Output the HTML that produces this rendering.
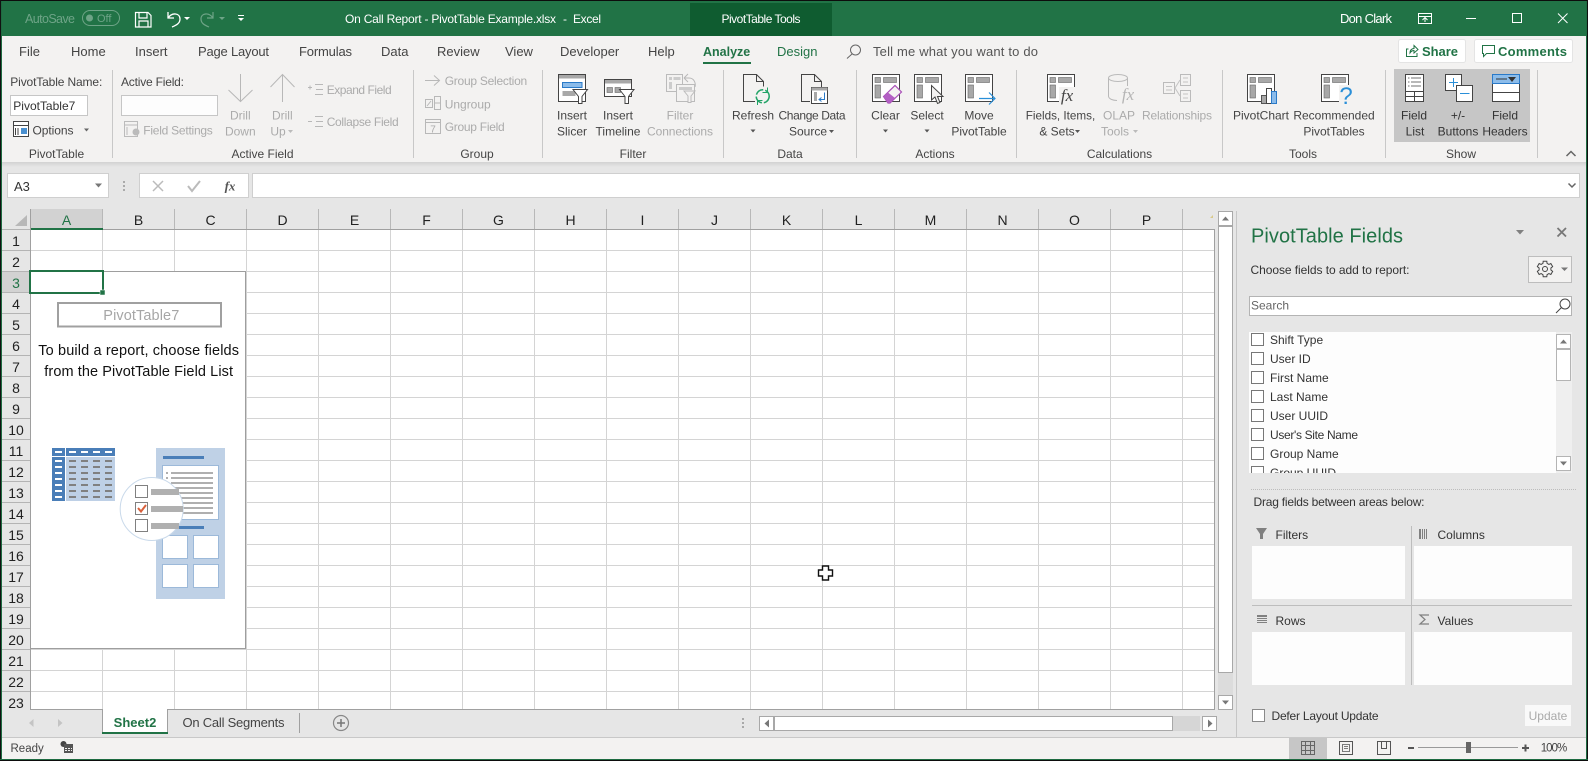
<!DOCTYPE html>
<html lang="en"><head><meta charset="utf-8"><title>On Call Report - PivotTable Example.xlsx - Excel</title>
<style>
html,body{margin:0;padding:0;background:#f3f2f1;overflow:hidden}
svg{display:block;font-family:"Liberation Sans",sans-serif}
text{font-size:12px;fill:#444}
.m{text-anchor:middle}
.d{fill:#ababab}
.w{fill:#fff;font-size:12px}
.tab{font-size:13px;fill:#444}
.h{font-size:14px;fill:#222}
.p{font-size:12px;fill:#333}
.s{stroke:#444;fill:none}
.l{stroke:#b8b8b8;fill:none}
</style></head><body>
<svg width="1588" height="761" viewBox="0 0 1588 761" xmlns="http://www.w3.org/2000/svg">
<defs>
<pattern id="grid" x="30" y="229" width="72" height="21" patternUnits="userSpaceOnUse">
<rect width="72" height="21" fill="#fff"/><rect x="0" width="1" height="21" fill="#d4d4d4"/><rect y="0" width="72" height="1" fill="#d4d4d4"/>
</pattern>
<pattern id="rh" x="0" y="229" width="30" height="21" patternUnits="userSpaceOnUse">
<rect width="30" height="21" fill="#e6e6e6"/><rect y="0" width="30" height="1" fill="#b4b4b4"/>
</pattern>
<linearGradient id="sh" x1="0" y1="0" x2="0" y2="1"><stop offset="0" stop-color="#d2d2d2"/><stop offset="1" stop-color="#e6e6e6"/></linearGradient>
<g id="pv"><rect x=".5" y=".5" width="27" height="27" fill="#fff" stroke="#444"/><rect x="3" y="3.500" width="5.500" height="5" fill="#a8a8a8" stroke="#666" stroke-width=".6"/><rect x="11.500" y="3.500" width="13" height="5" fill="#a8a8a8" stroke="#666" stroke-width=".6"/><rect x="3" y="11" width="5.500" height="13" fill="#a8a8a8" stroke="#666" stroke-width=".6"/></g>
<g id="cb"><rect x=".5" y=".5" width="12" height="12" fill="#fff" stroke="#777"/></g>
<g id="fun"><path d="M.5 .5H15L9.500 7.500V14.500H6V7.500Z" fill="#fff" stroke="#444"/></g>
</defs>

<!-- Title bar -->
<rect width="1588" height="36" fill="#217346"/>
<rect width="1588" height="1" fill="#0c0c0c"/>
<rect x="690" y="3" width="142" height="33" fill="#0f5c30"/>
<text x="25" y="23" textLength="50" style="font-size:12.500px;fill:#6ea487">AutoSave</text>
<rect x="82.500" y="10.500" width="37" height="15" rx="7.500" fill="none" stroke="#6ea487"/>
<circle cx="89.500" cy="18" r="3.500" fill="#6ea487"/>
<text x="97" y="22" style="font-size:11px;fill:#6ea487">Off</text>
<path d="M135.500 12.500H148L151 15.500V27H135.500Z M139 12.500V18H147V12.500 M139 27V21H148V27" fill="none" stroke="#fff" stroke-width="1.200"/>
<path d="M168 12V18H174 M168 18C172 12 180 13 180 19C180 23 177 25 172 27" fill="none" stroke="#fff" stroke-width="1.300"/>
<path d="M184 17H190L187 20Z" fill="#fff"/>
<path d="M213 12V18H207 M213 18C209 12 201 13 201 19C201 23 204 25 209 27" fill="none" stroke="#6ea487" stroke-width="1.200"/>
<path d="M219 17H225L222 20Z" fill="#6ea487"/>
<rect x="238" y="15" width="6" height="1" fill="#fff"/><path d="M238 18H244L241 21Z" fill="#fff"/>
<text x="345" y="23" class="w" textLength="211">On Call Report - PivotTable Example.xlsx</text>
<text x="563" y="23" class="w">-</text>
<text x="573" y="23" class="w" textLength="28">Excel</text>
<text x="761" y="23" class="m" textLength="79" style="font-size:12px;fill:#fff">PivotTable Tools</text>
<text x="1340" y="23" class="w" textLength="52" style="font-size:13px">Don Clark</text>
<path d="M1418.500 13.500H1431.500V23.500H1418.500Z M1418.500 16.500H1431.500 M1425 22V17.500 M1422.500 20L1425 17.500L1427.500 20" fill="none" stroke="#fff"/>
<rect x="1466" y="18" width="10" height="1" fill="#fff"/>
<rect x="1512.500" y="13.500" width="9" height="9" fill="none" stroke="#fff"/>
<path d="M1558 13.500L1567.500 23M1567.500 13.500L1558 23" stroke="#fff" fill="none"/>

<!-- Tabs -->
<rect y="36" width="1588" height="126" fill="#f3f2f1"/>
<text x="19" y="56" class="tab">File</text>
<text x="71" y="56" class="tab">Home</text>
<text x="135" y="56" class="tab">Insert</text>
<text x="198" y="56" class="tab" textLength="71">Page Layout</text>
<text x="299" y="56" class="tab" textLength="53">Formulas</text>
<text x="381" y="56" class="tab">Data</text>
<text x="437" y="56" class="tab">Review</text>
<text x="505" y="56" class="tab">View</text>
<text x="560" y="56" class="tab">Developer</text>
<text x="648" y="56" class="tab">Help</text>
<text x="703" y="56" class="tab" style="fill:#217346;font-weight:bold;font-size:12.500px">Analyze</text>
<rect x="703" y="62" width="48" height="2" fill="#217346"/>
<text x="777" y="56" class="tab" style="fill:#217346">Design</text>
<circle cx="855.500" cy="50" r="5" fill="none" stroke="#666"/><path d="M852 54L847 58.500" stroke="#666" fill="none"/>
<text x="873" y="56" class="tab" style="fill:#555" textLength="165">Tell me what you want to do</text>
<rect x="1398.500" y="39.500" width="67" height="23" rx="2" fill="#fff" stroke="#e4e4e4"/>
<path d="M1408.500 49H1406.500V56.500H1417V53M1410 53C1410 49.500 1412.500 48.500 1414 48.500V45.500L1418 49.500L1414 53V50.500C1412.500 50.500 1411 51.500 1410 53Z" fill="none" stroke="#217346"/>
<text x="1422" y="56" style="font-size:13px;font-weight:bold;fill:#217346" textLength="36">Share</text>
<rect x="1474.500" y="39.500" width="98" height="23" rx="2" fill="#fff" stroke="#e4e4e4"/>
<path d="M1482.500 45.500H1494.500V53.500H1486.500L1483.500 56.500V53.500H1482.500Z" fill="none" stroke="#217346"/>
<text x="1498" y="56" style="font-size:13px;font-weight:bold;fill:#217346" textLength="69">Comments</text>

<!-- Ribbon separators -->
<g fill="#c8c8c8">
<rect x="112" y="70" width="1" height="88"/><rect x="413" y="70" width="1" height="88"/><rect x="542" y="70" width="1" height="88"/><rect x="723" y="70" width="1" height="88"/><rect x="856" y="70" width="1" height="88"/><rect x="1016" y="70" width="1" height="88"/><rect x="1222" y="70" width="1" height="88"/><rect x="1385" y="70" width="1" height="88"/><rect x="1537" y="70" width="1" height="88"/>
</g>
<!-- group labels -->
<text x="56.500" y="158" class="m">PivotTable</text>
<text x="262.500" y="158" class="m">Active Field</text>
<text x="477" y="158" class="m">Group</text>
<text x="633" y="158" class="m">Filter</text>
<text x="790" y="158" class="m">Data</text>
<text x="935" y="158" class="m">Actions</text>
<text x="1119.500" y="158" class="m">Calculations</text>
<text x="1303" y="158" class="m">Tools</text>
<text x="1461" y="158" class="m">Show</text>
<path d="M1566.500 156L1571 151.500L1575.500 156" fill="none" stroke="#666" stroke-width="1.500"/>

<!-- PivotTable group -->
<text x="10.300" y="86" textLength="92">PivotTable Name:</text>
<rect x="10.500" y="95.500" width="77" height="20" fill="#fff" stroke="#c6c6c6"/>
<text x="13.300" y="110" style="fill:#333" textLength="62">PivotTable7</text>
<rect x="13.500" y="121.500" width="15" height="15" fill="#fff" stroke="#444"/>
<path d="M13.500 125.500H28.500M15.500 128V135M18 128V135" stroke="#444" fill="none"/>
<rect x="21" y="128" width="6" height="6" fill="#4a90d0"/>
<text x="32.500" y="134.300" textLength="41">Options</text>
<path d="M84 128.500H89L86.500 131.500Z" fill="#666"/>

<!-- Active Field -->
<text x="121" y="86" textLength="63">Active Field:</text>
<rect x="121.500" y="95.500" width="96" height="20" fill="#fdfdfd" stroke="#c6c6c6"/>
<rect x="124.500" y="121.500" width="13" height="15" fill="none" stroke="#bbb"/><path d="M124.500 125H137.500M127 127V135" stroke="#bbb" fill="none"/><circle cx="136" cy="132" r="3.500" fill="#bbb"/>
<text x="143.300" y="134.300" class="d" textLength="69.500">Field Settings</text>
<path d="M240.500 74V101M228.500 90L240.500 101.500L252.500 90" class="l"/>
<text x="240.300" y="119.300" class="m d">Drill</text><text x="240.300" y="135.300" class="m d">Down</text>
<path d="M282.500 102V75M270.500 87L282.500 74.500L294.500 87" class="l"/>
<text x="282.300" y="119.300" class="m d">Drill</text><text x="278" y="135.300" class="m d">Up</text>
<path d="M288 130H293L290.500 133Z" fill="#bbb"/>
<path d="M308 87.500H312M310 85.500V89.500M315 84.500H323M316 89.500H323M315 94.500H323" class="l"/>
<text x="326.700" y="94" class="d" textLength="65">Expand Field</text>
<path d="M308 121.500H312M315 116.500H323M316 121.500H323M315 126.500H323" class="l"/>
<text x="326.700" y="126" class="d" textLength="72">Collapse Field</text>

<!-- Group -->
<path d="M425 80.500H439M434 75.500L439.500 80.500L434 85.500" class="l"/>
<text x="444.700" y="85" class="d" textLength="82.500">Group Selection</text>
<rect x="425.500" y="99.500" width="7" height="8" fill="none" stroke="#b8b8b8"/><rect x="434.500" y="96.500" width="6" height="13" fill="none" stroke="#b8b8b8"/><path d="M434.500 103H440.500M427 106L431 101" class="l"/>
<text x="444.700" y="108.300" class="d" textLength="46">Ungroup</text>
<rect x="425.500" y="119.500" width="15" height="14" fill="none" stroke="#b8b8b8"/><path d="M425.500 122.500H440.500" class="l"/>
<text x="433" y="132.500" class="m" style="font-size:10px;fill:#aaa">7</text>
<text x="444.700" y="131" class="d" textLength="60">Group Field</text>

<!-- Filter -->
<rect x="558.500" y="74.500" width="27" height="27" fill="#fff" stroke="#444"/>
<rect x="559" y="75" width="26" height="3.500" fill="#a8a8a8"/>
<rect x="562.500" y="82.500" width="19.500" height="5" fill="#8cbcea" stroke="#2a7ac8"/>
<rect x="562.500" y="91" width="13" height="5" fill="#a8a8a8"/>
<use href="#fun" x="572.500" y="89"/>
<text x="572" y="119.300" class="m">Insert</text><text x="572" y="135.300" class="m">Slicer</text>
<rect x="604.500" y="79.500" width="27" height="17" fill="#fff" stroke="#444"/>
<rect x="605" y="80" width="26" height="3.500" fill="#a8a8a8"/>
<rect x="607" y="87.500" width="5.500" height="5" fill="#a8a8a8" stroke="#666" stroke-width=".6"/><rect x="615" y="87.500" width="5.500" height="5" fill="#a8a8a8" stroke="#666" stroke-width=".6"/>
<use href="#fun" x="619" y="89"/>
<text x="618" y="119.300" class="m">Insert</text><text x="618" y="135.300" class="m">Timeline</text>
<rect x="666.500" y="74.500" width="16" height="17" fill="none" stroke="#bbb"/>
<rect x="669" y="77" width="3" height="3" fill="#ccc"/><rect x="673.500" y="77" width="7" height="3" fill="#ccc"/><rect x="669" y="82" width="3" height="7" fill="#ccc"/>
<path d="M684 78L688 74M684 78L688 82M684 78H689C694 78 696 83 695 87" class="l"/>
<rect x="676.500" y="84.500" width="18" height="17" fill="#f3f2f1" stroke="#bbb"/>
<rect x="679" y="87" width="13" height="3" fill="#ccc"/>
<path d="M684 91H695L691 96V102.500H688V96Z" fill="#f3f2f1" stroke="#bbb"/>
<text x="680" y="119.300" class="m d">Filter</text>
<text x="680" y="135.300" class="m d" textLength="66">Connections</text>

<!-- Data -->
<path d="M755 101.500H743.500V74.500H756.500L763.500 81.500V86.500M756.500 74.500V81.500H763.500" fill="none" stroke="#444"/>
<circle cx="762.700" cy="96.300" r="6.500" fill="#f3f2f1" stroke="#21a366" stroke-width="1.500" stroke-dasharray="9 2"/>
<path d="M767.500 87.500V92.500H762.500M757.500 105V100.500H762.500" stroke="#21a366" fill="none"/>
<text x="753" y="119.300" class="m">Refresh</text>
<path d="M750.500 129.500H755.500L753 132.500Z" fill="#555"/>
<path d="M810 101.500H801.500V74.500H814.500L821.500 81.500V87M814.500 74.500V81.500H821.500" fill="none" stroke="#444"/>
<rect x="811.500" y="87.500" width="16" height="16" fill="#fff" stroke="#444"/>
<rect x="811.500" y="87.500" width="16" height="3" fill="#a8a8a8"/>
<rect x="814" y="92" width="3" height="9" fill="#a8a8a8"/>
<path d="M824.500 92.500V99.500H819.500M821.500 97.500L819 99.500L821.500 101.500" fill="none" stroke="#2a7ac8"/>
<text x="812" y="119.300" class="m" textLength="67">Change Data</text>
<text x="808" y="135.300" class="m">Source</text>
<path d="M829 130H834L831.500 133Z" fill="#555"/>

<!-- Actions -->
<use href="#pv" x="872" y="74"/>
<path d="M883.500 96.500L895 85.500L901.500 92L890 103H888Z" fill="#f3f2f1" stroke="#a94fb8" stroke-width="1.200"/>
<path d="M883.500 96.500L888 92.500L895 98L890 103H888Z" fill="#b35fc4"/>
<text x="885.500" y="119.300" class="m">Clear</text>
<path d="M883 129.500H888L885.500 132.500Z" fill="#555"/>
<use href="#pv" x="914" y="74"/>
<path d="M931.500 85.500V100L935 97L937.500 103.500L940 102.500L937.500 96.500H943Z" fill="#f3f2f1" stroke="#444"/>
<text x="927" y="119.300" class="m">Select</text>
<path d="M924.500 129.500H929.500L927 132.500Z" fill="#555"/>
<use href="#pv" x="965" y="74"/>
<path d="M979 98.500H994.500M989 92.500L995 98.500L989 104.500" fill="none" stroke="#2a8fd8" stroke-width="1.200"/>
<text x="979" y="119.300" class="m">Move</text><text x="979" y="135.300" class="m">PivotTable</text>

<!-- Calculations -->
<use href="#pv" x="1047" y="74"/>
<rect x="1059" y="87" width="18" height="17" fill="#f3f2f1"/>
<text x="1067" y="101" class="m" style="font-family:'Liberation Serif',serif;font-style:italic;font-size:17px;fill:#444">fx</text>
<text x="1060.500" y="119.300" class="m" style="font-size:11.700px">Fields, Items,</text>
<text x="1057" y="135.300" class="m">&amp; Sets</text>
<path d="M1075 130H1080L1077.500 133Z" fill="#555"/>
<ellipse cx="1118" cy="78" rx="9.500" ry="3.500" fill="none" stroke="#bbb"/>
<path d="M1108.500 78V96C1108.500 99 1113 100.500 1117 100.500M1127.500 78V86" class="l"/>
<text x="1128" y="100" class="m" style="font-family:'Liberation Serif',serif;font-style:italic;font-size:17px;fill:#b5b5b5">fx</text>
<text x="1119" y="119.300" class="m d">OLAP</text><text x="1115" y="135.300" class="m d">Tools</text>
<path d="M1133 130H1138L1135.500 133Z" fill="#bbb"/>
<rect x="1163.500" y="82.500" width="11" height="11" fill="none" stroke="#bbb"/><rect x="1180.500" y="74.500" width="10" height="11" fill="none" stroke="#bbb"/><rect x="1180.500" y="90.500" width="10" height="11" fill="none" stroke="#bbb"/>
<path d="M1175 88L1180 80M1175 88L1180 96M1166 86.500H1172M1166 90H1172M1183 78H1188M1183 82H1188M1183 94H1188M1183 98H1188" stroke="#c4c4c4" fill="none"/>
<text x="1177" y="119.300" class="m d" textLength="70">Relationships</text>

<!-- Tools -->
<use href="#pv" x="1247" y="74"/>
<rect x="1261.500" y="95.500" width="5" height="8" fill="#a8a8a8" stroke="#555"/><rect x="1266.500" y="88.500" width="5" height="15" fill="#fff" stroke="#444"/><rect x="1271.500" y="91.500" width="5" height="12" fill="#8cbcea" stroke="#2a7ac8"/>
<text x="1261" y="119.300" class="m">PivotChart</text>
<use href="#pv" x="1321" y="74"/>
<rect x="1339" y="85" width="14" height="19" fill="#f3f2f1"/>
<text x="1346" y="104" class="m" style="font-size:24px;fill:#2a8fd8">?</text>
<text x="1334" y="119.300" class="m">Recommended</text><text x="1334" y="135.300" class="m">PivotTables</text>

<!-- Show -->
<rect x="1394" y="69" width="136" height="73" fill="#c6c6c6"/>
<rect x="1405.500" y="74.500" width="18" height="27" fill="#fff" stroke="#444"/>
<path d="M1408 78H1409.500M1411 78H1421M1408 82H1409.500M1411 82H1421M1408 86H1409.500M1411 86H1421" stroke="#444" fill="none" stroke-width=".8"/>
<path d="M1405.500 91.500H1423.500M1405.500 96.500H1423.500M1414.500 91.500V101.500" stroke="#444" fill="none"/>
<text x="1414" y="119.300" class="m" style="fill:#333">Field</text><text x="1415" y="135.300" class="m" style="fill:#333">List</text>
<rect x="1445.500" y="74.500" width="16" height="16" fill="#fff" stroke="#444"/>
<path d="M1449 82.500H1458M1453.500 78V87" stroke="#2a8fd8" fill="none"/>
<rect x="1456.500" y="85.500" width="16" height="16" fill="#fff" stroke="#444"/>
<path d="M1460 93.500H1469.500" stroke="#2a8fd8" fill="none"/>
<text x="1458" y="119.300" class="m" style="fill:#333">+/-</text><text x="1458" y="135.300" class="m" style="fill:#333">Buttons</text>
<rect x="1492.500" y="74.500" width="27" height="27" fill="#fff" stroke="#444"/>
<rect x="1492.500" y="74.500" width="27" height="9" fill="#8cbcea" stroke="#2a7ac8"/>
<path d="M1496 79H1507" stroke="#333" fill="none"/><path d="M1508 77H1516L1512 82Z" fill="#333"/>
<path d="M1492.500 92.500H1519.500" stroke="#444" fill="none"/>
<text x="1505" y="119.300" class="m" style="fill:#333">Field</text><text x="1505" y="135.300" class="m" style="fill:#333">Headers</text>

<!-- Formula bar -->
<rect y="162" width="1588" height="47" fill="#e6e6e6"/>
<rect y="162" width="1588" height="5" fill="url(#sh)"/>
<rect x="7.500" y="173.500" width="101" height="24" fill="#fff" stroke="#cfcfcf"/>
<text x="14" y="191" style="font-size:13px;fill:#333">A3</text>
<path d="M95 183.500H102L98.500 187.500Z" fill="#777"/>
<g fill="#aaa"><rect x="123" y="181" width="2" height="2"/><rect x="123" y="185" width="2" height="2"/><rect x="123" y="189" width="2" height="2"/></g>
<rect x="139.500" y="173.500" width="109" height="24" fill="#fff" stroke="#cfcfcf"/>
<path d="M153 181L163 191M163 181L153 191" stroke="#bbb" stroke-width="1.500" fill="none"/>
<path d="M188 186L192 191L200 181" stroke="#bbb" stroke-width="2" fill="none"/>
<text x="230" y="190.500" class="m" style="font-family:'Liberation Serif',serif;font-style:italic;font-weight:bold;font-size:13px;fill:#555">fx</text>
<rect x="252.500" y="173.500" width="1327" height="24" fill="#fff" stroke="#cfcfcf"/>
<path d="M1568.500 183.500L1572 187L1575.500 183.500" fill="none" stroke="#666" stroke-width="1.500"/>

<!-- Grid -->
<rect x="0" y="209" width="1237" height="528" fill="#e6e6e6"/>
<rect x="30" y="229" width="1184" height="480" fill="url(#grid)"/>
<rect x="2" y="229" width="28" height="480" fill="url(#rh)"/>
<rect x="30" y="209" width="72" height="20" fill="#d2d2d2"/>
<g fill="#b8b8b8"><rect x="102" y="209" width="1" height="20"/><rect x="174" y="209" width="1" height="20"/><rect x="246" y="209" width="1" height="20"/><rect x="318" y="209" width="1" height="20"/><rect x="390" y="209" width="1" height="20"/><rect x="462" y="209" width="1" height="20"/><rect x="534" y="209" width="1" height="20"/><rect x="606" y="209" width="1" height="20"/><rect x="678" y="209" width="1" height="20"/><rect x="750" y="209" width="1" height="20"/><rect x="822" y="209" width="1" height="20"/><rect x="894" y="209" width="1" height="20"/><rect x="966" y="209" width="1" height="20"/><rect x="1038" y="209" width="1" height="20"/><rect x="1110" y="209" width="1" height="20"/><rect x="1182" y="209" width="1" height="20"/></g>
<rect x="30" y="229" width="1184" height="1" fill="#a0a0a0"/>
<rect x="30" y="228" width="73" height="2" fill="#217346"/>
<rect x="30" y="209" width="1" height="500" fill="#a0a0a0"/>
<rect x="1214" y="229" width="1" height="481" fill="#a0a0a0"/>
<rect x="30" y="709" width="1185" height="1" fill="#a0a0a0"/>
<path d="M15 226H27V215Z" fill="#b8b8b8"/>
<path d="M1210 218L1213 215V218Z" fill="#d9c98a"/>
<text x="66.500" y="225" class="m h" style="fill:#217346">A</text>
<text x="138.500" y="225" class="m h">B</text>
<text x="210.500" y="225" class="m h">C</text>
<text x="282.500" y="225" class="m h">D</text>
<text x="354.500" y="225" class="m h">E</text>
<text x="426.500" y="225" class="m h">F</text>
<text x="498.500" y="225" class="m h">G</text>
<text x="570.500" y="225" class="m h">H</text>
<text x="642.500" y="225" class="m h">I</text>
<text x="714.500" y="225" class="m h">J</text>
<text x="786.500" y="225" class="m h">K</text>
<text x="858.500" y="225" class="m h">L</text>
<text x="930.500" y="225" class="m h">M</text>
<text x="1002.500" y="225" class="m h">N</text>
<text x="1074.500" y="225" class="m h">O</text>
<text x="1146.500" y="225" class="m h">P</text>
<rect x="2" y="272" width="28" height="20" fill="#d2d2d2"/>
<text x="16" y="246" class="m h">1</text>
<text x="16" y="267" class="m h">2</text>
<text x="16" y="288" class="m h" style="fill:#217346">3</text>
<text x="16" y="309" class="m h">4</text>
<text x="16" y="330" class="m h">5</text>
<text x="16" y="351" class="m h">6</text>
<text x="16" y="372" class="m h">7</text>
<text x="16" y="393" class="m h">8</text>
<text x="16" y="414" class="m h">9</text>
<text x="16" y="435" class="m h">10</text>
<text x="16" y="456" class="m h">11</text>
<text x="16" y="477" class="m h">12</text>
<text x="16" y="498" class="m h">13</text>
<text x="16" y="519" class="m h">14</text>
<text x="16" y="540" class="m h">15</text>
<text x="16" y="561" class="m h">16</text>
<text x="16" y="582" class="m h">17</text>
<text x="16" y="603" class="m h">18</text>
<text x="16" y="624" class="m h">19</text>
<text x="16" y="645" class="m h">20</text>
<text x="16" y="666" class="m h">21</text>
<text x="16" y="687" class="m h">22</text>
<text x="16" y="708" class="m h">23</text>

<!-- Pivot placeholder -->
<rect x="30.500" y="271.500" width="215" height="377" fill="#fff" stroke="#9e9e9e"/>
<rect x="58" y="303" width="163" height="23.500" fill="#fff" stroke="#a0a0a0" stroke-width="2"/>
<text x="103.300" y="320" textLength="76" style="font-size:14.500px;fill:#a6a6a6">PivotTable7</text>
<text x="38.300" y="355" textLength="200.700" style="font-size:14.500px;fill:#111">To build a report, choose fields</text>
<text x="44.300" y="376" textLength="188.700" style="font-size:14.500px;fill:#111">from the PivotTable Field List</text>
<!-- Illustration -->
<rect x="52" y="448" width="63" height="8" fill="#4a7eb8"/>
<rect x="65" y="448" width="1" height="8" fill="#fff"/>
<rect x="52" y="457" width="13" height="44" fill="#4a7eb8"/>
<rect x="66" y="457" width="49" height="44" fill="#bed0e6"/>
<g fill="#fff"><rect x="55" y="451" width="7" height="2"/><rect x="69" y="451" width="7" height="2"/><rect x="81" y="451" width="7" height="2"/><rect x="93" y="451" width="7" height="2"/><rect x="105" y="451" width="7" height="2"/>
<rect x="55" y="460" width="7" height="2"/><rect x="55" y="466" width="7" height="2"/><rect x="55" y="472" width="7" height="2"/><rect x="55" y="478" width="7" height="2"/><rect x="55" y="484" width="7" height="2"/><rect x="55" y="490" width="7" height="2"/><rect x="55" y="496" width="7" height="2"/></g>
<g fill="#808080"><rect x="69" y="460" width="7" height="2"/><rect x="81" y="460" width="7" height="2"/><rect x="93" y="460" width="7" height="2"/><rect x="105" y="460" width="7" height="2"/>
<rect x="69" y="466" width="7" height="2"/><rect x="81" y="466" width="7" height="2"/><rect x="93" y="466" width="7" height="2"/><rect x="105" y="466" width="7" height="2"/>
<rect x="69" y="472" width="7" height="2"/><rect x="81" y="472" width="7" height="2"/><rect x="93" y="472" width="7" height="2"/><rect x="105" y="472" width="7" height="2"/>
<rect x="69" y="478" width="7" height="2"/><rect x="81" y="478" width="7" height="2"/><rect x="93" y="478" width="7" height="2"/><rect x="105" y="478" width="7" height="2"/>
<rect x="69" y="484" width="7" height="2"/><rect x="81" y="484" width="7" height="2"/><rect x="93" y="484" width="7" height="2"/><rect x="105" y="484" width="7" height="2"/>
<rect x="69" y="490" width="7" height="2"/><rect x="81" y="490" width="7" height="2"/><rect x="93" y="490" width="7" height="2"/><rect x="105" y="490" width="7" height="2"/>
<rect x="69" y="496" width="7" height="2"/><rect x="81" y="496" width="7" height="2"/><rect x="93" y="496" width="7" height="2"/><rect x="105" y="496" width="7" height="2"/></g>
<rect x="156" y="448" width="69" height="151" fill="#bfd1e6"/>
<rect x="163" y="456" width="41" height="3" fill="#4a7eb8"/>
<rect x="162.500" y="465.500" width="56" height="54" fill="#fff" stroke="#9cb9d9"/>
<g fill="#afafaf"><rect x="166" y="472" width="2" height="2"/><rect x="171" y="472" width="42" height="2"/><rect x="166" y="477" width="2" height="2"/><rect x="171" y="477" width="42" height="2"/><rect x="171" y="482" width="42" height="2"/><rect x="171" y="487" width="42" height="2"/><rect x="171" y="492" width="42" height="2"/><rect x="171" y="497" width="42" height="2"/><rect x="171" y="502" width="42" height="2"/><rect x="171" y="507" width="42" height="2"/><rect x="171" y="512" width="42" height="2"/></g>
<rect x="178" y="526" width="26" height="3" fill="#4a7eb8"/>
<g fill="#fff" stroke="#9cb9d9"><rect x="162.500" y="535.500" width="25" height="23"/><rect x="193.500" y="535.500" width="25" height="23"/><rect x="162.500" y="564.500" width="25" height="23"/><rect x="193.500" y="564.500" width="25" height="23"/></g>
<circle cx="151.700" cy="509" r="31.500" fill="#fff" stroke="#c9d9ea"/>
<g fill="#fff" stroke="#808080"><rect x="135.500" y="485.500" width="12" height="12"/><rect x="135.500" y="502.500" width="12" height="12"/><rect x="135.500" y="519.500" width="12" height="12"/></g>
<rect x="151" y="489" width="28" height="6" fill="#b0b0b0"/><rect x="151" y="506" width="32" height="6" fill="#b0b0b0"/><rect x="151" y="523" width="28" height="6" fill="#b0b0b0"/>
<path d="M138 508L141 511.500L146 505" fill="none" stroke="#d9613c" stroke-width="2"/>

<!-- Selected cell -->
<rect x="30" y="271" width="73" height="22" fill="none" stroke="#217346" stroke-width="2"/>
<rect x="100" y="290" width="5" height="5" fill="#217346" stroke="#fff" stroke-width=".5"/>

<!-- Cursor -->
<path d="M823.500 566H826.500V570H830.500V576H826.500V580H820.500V576H816.500V570H820.500V566Z" transform="translate(2,0)" fill="#fff" stroke="#111" stroke-width="1.400"/>

<!-- V scrollbar -->
<rect x="1218" y="212" width="15" height="498" fill="#dcdcdc"/>
<rect x="1218.500" y="211.500" width="14" height="14" fill="#fff" stroke="#a8a8a8"/>
<path d="M1222 220.500H1229L1225.500 216.500Z" fill="#777"/>
<rect x="1218.500" y="226.500" width="14" height="446" fill="#fff" stroke="#a8a8a8"/>
<rect x="1218.500" y="695.500" width="14" height="14" fill="#fff" stroke="#a8a8a8"/>
<path d="M1222 700.500H1229L1225.500 704.500Z" fill="#777"/>

<!-- Sheet tabs -->
<rect x="102" y="709" width="65" height="25" fill="#fff"/>
<rect x="102" y="709" width="1" height="25" fill="#a0a0a0"/><rect x="167" y="709" width="1" height="25" fill="#a0a0a0"/>
<rect x="102" y="732" width="66" height="2" fill="#217346"/>
<text x="135" y="727" class="m" style="font-size:13px;font-weight:bold;fill:#217346">Sheet2</text>
<text x="182.500" y="727" style="font-size:13px;fill:#444" textLength="102">On Call Segments</text>
<rect x="299" y="713" width="1" height="20" fill="#a0a0a0"/>
<circle cx="341" cy="723" r="7.500" fill="none" stroke="#888" stroke-width="1.200"/>
<path d="M337 723H345M341 719V727" stroke="#777" stroke-width="1.500" fill="none"/>
<path d="M33.500 719V727L29 723Z" fill="#c4c4c4"/><path d="M58 719V727L62.500 723Z" fill="#c4c4c4"/>
<g fill="#a8a8a8"><rect x="742" y="718" width="2" height="2"/><rect x="742" y="722" width="2" height="2"/><rect x="742" y="726" width="2" height="2"/></g>
<rect x="759" y="716" width="441" height="15" fill="#d6d6d6"/>
<rect x="759.500" y="716.500" width="14" height="14" fill="#fff" stroke="#a8a8a8"/>
<path d="M769 719.500V727.500L764.500 723.500Z" fill="#777"/>
<rect x="774.500" y="716.500" width="398" height="14" fill="#fff" stroke="#a8a8a8"/>
<rect x="1202.500" y="716.500" width="14" height="14" fill="#fff" stroke="#a8a8a8"/>
<path d="M1208 719.500V727.500L1212.500 723.500Z" fill="#777"/>

<!-- Panel -->
<rect x="1236" y="209" width="351" height="528" fill="#e6e6e6"/>
<rect x="1236" y="211" width="1" height="526" fill="#c6c6c6"/>
<text x="1251" y="242.500" textLength="152" style="font-size:20px;fill:#217346">PivotTable Fields</text>
<path d="M1516 230H1524L1520 234.500Z" fill="#808080"/>
<path d="M1557.500 228L1566 236.500M1566 228L1557.500 236.500" stroke="#777" stroke-width="1.800" fill="none"/>
<text x="1250.500" y="274" style="font-size:12px;fill:#333" textLength="159">Choose fields to add to report:</text>
<rect x="1528.500" y="256.500" width="43" height="26" fill="#f3f2f1" stroke="#bdbdbd"/>
<g transform="translate(1545,269)" fill="none" stroke="#444"><polygon points="3.860,-4.600 5.850,-5.460 7.650,-2.340 5.910,-1.040 5.910,1.040 7.650,2.340 5.850,5.460 3.860,4.600 2.050,5.640 1.800,7.800 -1.800,7.800 -2.050,5.640 -3.860,4.600 -5.850,5.460 -7.650,2.340 -5.910,1.040 -5.910,-1.040 -7.650,-2.340 -5.850,-5.460 -3.860,-4.600 -2.050,-5.640 -1.800,-7.800 1.800,-7.800 2.050,-5.640"/><circle r="2.500"/></g>
<path d="M1561 267.500H1568L1564.500 271Z" fill="#777"/>
<rect x="1249.500" y="296.500" width="322" height="19" fill="#fff" stroke="#b4b4b4"/>
<text x="1251" y="309.500" style="font-size:12px;fill:#666">Search</text>
<circle cx="1565" cy="304" r="5" fill="none" stroke="#444"/><path d="M1561.500 307.500L1556 313" stroke="#444" fill="none"/>
<svg x="1249" y="332" width="323" height="141"><rect width="323" height="141" fill="#fdfdfd"/>
<use href="#cb" x="2" y="1"/><text x="21" y="12" class="p">Shift Type</text>
<use href="#cb" x="2" y="20"/><text x="21" y="31" class="p">User ID</text>
<use href="#cb" x="2" y="39"/><text x="21" y="50" class="p">First Name</text>
<use href="#cb" x="2" y="58"/><text x="21" y="69" class="p">Last Name</text>
<use href="#cb" x="2" y="77"/><text x="21" y="88" class="p">User UUID</text>
<use href="#cb" x="2" y="96"/><text x="21" y="107" class="p" textLength="88">User's Site Name</text>
<use href="#cb" x="2" y="115"/><text x="21" y="126" class="p">Group Name</text>
<use href="#cb" x="2" y="134"/><text x="21" y="145" class="p">Group UUID</text>
<rect x="307" width="16" height="141" fill="#efefef"/>
<rect x="307.500" y="2.500" width="14" height="14" fill="#fff" stroke="#b4b4b4"/>
<path d="M311 11.500H318L314.500 7.500Z" fill="#777"/>
<rect x="307.500" y="17.500" width="14" height="31" fill="#fff" stroke="#b4b4b4"/>
<rect x="307.500" y="124.500" width="14" height="14" fill="#fff" stroke="#b4b4b4"/>
<path d="M311 129.500H318L314.500 133.500Z" fill="#777"/>
</svg>
<path d="M1251 489.500H1577" stroke="#bcbcbc" stroke-dasharray="1 1" fill="none"/>
<text x="1253.500" y="506" style="font-size:12px;fill:#333" textLength="171">Drag fields between areas below:</text>
<rect x="1252" y="546" width="153" height="53" fill="#fdfdfd"/>
<rect x="1414" y="546" width="158" height="53" fill="#fdfdfd"/>
<rect x="1252" y="632" width="153" height="53" fill="#fdfdfd"/>
<rect x="1414" y="632" width="158" height="53" fill="#fdfdfd"/>
<rect x="1411" y="526" width="1" height="159" fill="#bdbdbd"/>
<rect x="1252" y="605" width="320" height="1" fill="#bdbdbd"/>
<path d="M1256 528H1267L1263 534V539H1260V534Z" fill="#808080"/>
<text x="1275.500" y="539" style="font-size:12px;fill:#333">Filters</text>
<g fill="#808080"><rect x="1419" y="529" width="2" height="10"/><rect x="1422" y="529" width="1" height="10"/><rect x="1424" y="529" width="1" height="10"/><rect x="1426" y="529" width="1" height="10"/></g>
<text x="1437.500" y="539" style="font-size:12px;fill:#333">Columns</text>
<g fill="#808080"><rect x="1257" y="615" width="10" height="2"/><rect x="1257" y="618" width="10" height="1"/><rect x="1257" y="620" width="10" height="1"/><rect x="1257" y="622" width="10" height="1"/></g>
<text x="1275.500" y="625" style="font-size:12px;fill:#333">Rows</text>
<path d="M1429 615H1420L1425 619.500L1420 624H1429" fill="none" stroke="#808080" stroke-width="1.200"/>
<text x="1437.500" y="625" style="font-size:12px;fill:#333">Values</text>
<rect x="1252.500" y="709.500" width="12" height="12" fill="#fff" stroke="#8a8a8a"/>
<text x="1271.500" y="720" style="font-size:12px;fill:#333" textLength="107">Defer Layout Update</text>
<rect x="1525" y="705" width="46" height="21" fill="#f9f9f9"/>
<text x="1548" y="720" class="m" style="font-size:12px;fill:#aaa">Update</text>

<!-- Status bar -->
<rect y="737" width="1588" height="22" fill="#f3f2f1"/>
<rect y="737" width="1588" height="1" fill="#c8c8c8"/>
<text x="10.500" y="752" style="font-size:11.500px;fill:#444">Ready</text>
<circle cx="63.500" cy="744" r="3" fill="#444"/>
<rect x="64" y="744" width="9" height="9" fill="#555"/>
<g fill="#f3f2f1"><rect x="65" y="748" width="2" height="1"/><rect x="68" y="748" width="2" height="1"/><rect x="71" y="748" width="1" height="1"/><rect x="65" y="750" width="2" height="1"/><rect x="68" y="750" width="2" height="1"/><rect x="71" y="750" width="1" height="1"/></g>
<rect x="1289" y="738" width="38" height="21" fill="#c6c6c6"/>
<path d="M1301.500 741.500H1314.500V754.500H1301.500ZM1301.500 745.500H1314.500M1301.500 750.500H1314.500M1305.500 741.500V754.500M1310.500 741.500V754.500" fill="none" stroke="#666"/>
<rect x="1339.500" y="741.500" width="13" height="13" fill="none" stroke="#555"/>
<path d="M1342.500 744.500H1349.500V751.500H1342.500ZM1344 746.500H1348M1344 748.500H1348" fill="none" stroke="#555" stroke-width=".8"/>
<path d="M1377.500 741.500H1390.500V754.500H1377.500ZM1381.500 741.500V748.500H1386.500V741.500" fill="none" stroke="#555"/>
<rect x="1408" y="747" width="6" height="2" fill="#555"/>
<rect x="1418" y="747" width="100" height="1" fill="#9a9a9a"/>
<rect x="1466" y="742" width="5" height="11" fill="#666"/>
<path d="M1522 748H1529M1525.500 744.500V751.500" stroke="#555" stroke-width="2" fill="none"/>
<text x="1540.700" y="751.500" textLength="26.500" style="font-size:11.500px;fill:#444">100%</text>

<!-- Window edges -->
<rect x="0" y="0" width="1" height="761" fill="#111"/><rect x="1" y="1" width="1" height="760" fill="#1e6b41"/>
<rect x="1587" y="0" width="1" height="761" fill="#111"/><rect x="1586" y="1" width="1" height="760" fill="#1e6b41"/>
<rect x="0" y="759" width="1588" height="1" fill="#1e6b41"/><rect x="0" y="760" width="1588" height="1" fill="#0c0c0c"/>
</svg>
</body></html>
